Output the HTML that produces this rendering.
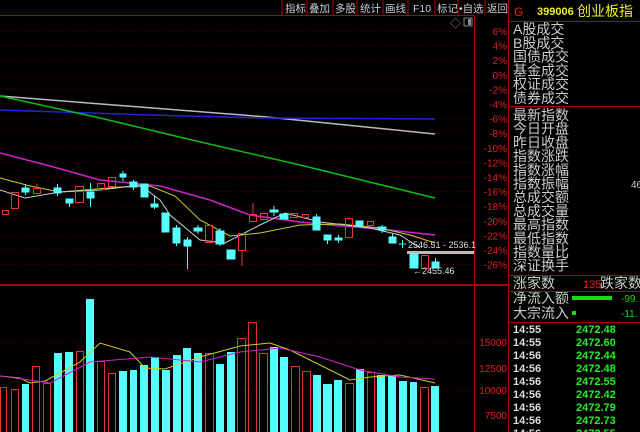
<!DOCTYPE html>
<html><head><meta charset="utf-8"><style>
body{margin:0;background:#000;width:640px;height:432px;overflow:hidden;font-family:"Liberation Sans","Noto Sans CJK SC",sans-serif}
svg{position:absolute;left:0;top:0}
</style></head><body>
<svg width="640" height="432" xmlns="http://www.w3.org/2000/svg" font-family="Liberation Sans, Noto Sans CJK SC, sans-serif">
<!-- toolbar -->
<line x1="0" y1="15.5" x2="474" y2="15.5" stroke="#a00" stroke-width="1"/>
<g stroke="#a00"><line x1="282" y1="0" x2="282" y2="15"/><line x1="307" y1="0" x2="307" y2="15"/><line x1="333" y1="0" x2="333" y2="15"/><line x1="357" y1="0" x2="357" y2="15"/><line x1="383" y1="0" x2="383" y2="15"/><line x1="408" y1="0" x2="408" y2="15"/><line x1="435" y1="0" x2="435" y2="15"/><line x1="458" y1="0" x2="458" y2="15"/><line x1="485" y1="0" x2="485" y2="15"/><line x1="508.5" y1="0" x2="508.5" y2="432"/></g>
<g fill="#ccc" font-size="10.5"><text x="285" y="12">指标</text><text x="309" y="12">叠加</text><text x="335" y="12">多股</text><text x="360" y="12">统计</text><text x="385" y="12">画线</text><text x="413" y="12">F10</text><text x="437" y="12">标记</text><text x="459" y="12">•自选</text><text x="487" y="12">返回</text></g>
<text x="450" y="27" fill="#888" font-size="11">◇</text><rect x="464" y="18" width="8" height="8" fill="none" stroke="#888"/><rect x="468" y="19" width="3" height="6" fill="#888"/>
<!-- axis -->
<line x1="474.5" y1="15" x2="474.5" y2="432" stroke="#a00"/>
<g stroke="#500" stroke-dasharray="1,2">
<line x1="0" y1="31" x2="474" y2="31"/><line x1="0" y1="45.6" x2="474" y2="45.6"/><line x1="0" y1="60.2" x2="474" y2="60.2"/><line x1="0" y1="74.8" x2="474" y2="74.8"/><line x1="0" y1="89.4" x2="474" y2="89.4"/><line x1="0" y1="104" x2="474" y2="104"/><line x1="0" y1="118.6" x2="474" y2="118.6"/><line x1="0" y1="133.2" x2="474" y2="133.2"/><line x1="0" y1="147.8" x2="474" y2="147.8"/><line x1="0" y1="162.4" x2="474" y2="162.4"/><line x1="0" y1="177" x2="474" y2="177"/><line x1="0" y1="191.6" x2="474" y2="191.6"/><line x1="0" y1="206.2" x2="474" y2="206.2"/><line x1="0" y1="220.8" x2="474" y2="220.8"/><line x1="0" y1="235.4" x2="474" y2="235.4"/><line x1="0" y1="250" x2="474" y2="250"/><line x1="0" y1="264.6" x2="474" y2="264.6"/>
<line x1="0" y1="342" x2="474" y2="342"/><line x1="0" y1="390" x2="474" y2="390"/>
</g>
<g fill="#d22" font-size="10" text-anchor="end">
<text x="507" y="35">6%</text><text x="507" y="49.6">4%</text><text x="507" y="64.2">2%</text><text x="507" y="78.8">0%</text><text x="507" y="93.4">-2%</text><text x="507" y="108">-4%</text><text x="507" y="122.6">-6%</text><text x="507" y="137.2">-8%</text><text x="507" y="151.8">-10%</text><text x="507" y="166.4">-12%</text><text x="507" y="181">-14%</text><text x="507" y="195.6">-16%</text><text x="507" y="210.2">-18%</text><text x="507" y="224.8">-20%</text><text x="507" y="239.4">-22%</text><text x="507" y="254">-24%</text><text x="507" y="268.6">-26%</text>
<text x="507" y="346">15000</text><text x="507" y="372">12500</text><text x="507" y="394">10000</text><text x="507" y="419">7500</text>
</g>
<line x1="0" y1="285" x2="509" y2="285" stroke="#a00" stroke-width="2"/>
<!-- MA lines main -->
<polyline fill="none" stroke="#bbb" stroke-width="1.5" points="0,96 267,117 435,134"/>
<polyline fill="none" stroke="#22d" stroke-width="1.5" points="0,110 150,115 267,118 435,119"/>
<polyline fill="none" stroke="#1b1" stroke-width="1.5" points="0,96 100,118 192,140 300,165 435,198"/>
<polyline fill="none" stroke="#c2c" stroke-width="1.5" points="0,153 50,166 100,180 160,186 210,200 250,215 300,222 330,225 380,229 435,235"/>
<polyline fill="none" stroke="#cc2" stroke-width="1" points="0,178 30,186 60,192 120,187 150,186 175,196 200,220 230,236 260,233 300,225 340,224 380,228 410,235 435,243"/>
<polyline fill="none" stroke="#ccc" stroke-width="1" points="0,190 25,198 60,192 100,190 140,185 160,200 170,215 200,240 225,243 260,225 285,213 320,222 370,228 400,235 420,248"/>
<!-- candles -->
<g fill="#5ff" stroke="#5ff">
<rect x="22" y="188" width="7" height="4"/><line x1="25.5" y1="184" x2="25.5" y2="195"/>
<rect x="54" y="188" width="7" height="5"/><line x1="57.5" y1="184" x2="57.5" y2="196"/>
<rect x="66" y="199" width="7" height="4"/><line x1="69.5" y1="199" x2="69.5" y2="207"/>
<rect x="87" y="192" width="7" height="6"/><line x1="90.5" y1="183" x2="90.5" y2="207"/>
<rect x="120" y="174" width="6" height="3"/><line x1="123" y1="171" x2="123" y2="181"/>
<rect x="130" y="182" width="7" height="5"/><line x1="133.5" y1="180" x2="133.5" y2="190"/>
<rect x="141" y="184" width="7" height="13"/>
<rect x="151" y="204" width="7" height="3"/><line x1="154.5" y1="196" x2="154.5" y2="209"/>
<rect x="162" y="213" width="7" height="19"/>
<rect x="173" y="228" width="7" height="15"/><line x1="176.5" y1="225" x2="176.5" y2="246"/>
<rect x="184" y="240" width="7" height="6"/><line x1="187.5" y1="237" x2="187.5" y2="269"/>
<rect x="194" y="228" width="8" height="3"/><line x1="198" y1="225" x2="198" y2="234"/>
<rect x="216" y="231" width="8" height="13"/><line x1="220" y1="228" x2="220" y2="246"/>
<rect x="227" y="250" width="8" height="9"/>
<rect x="270" y="210" width="8" height="2"/><line x1="274" y1="206" x2="274" y2="216"/>
<rect x="280" y="214" width="8" height="5"/>
<rect x="313" y="217" width="7" height="13"/><line x1="316.5" y1="214" x2="316.5" y2="230"/>
<rect x="324" y="235" width="7" height="5"/><line x1="327.5" y1="235" x2="327.5" y2="244"/>
<rect x="335" y="238" width="7" height="2"/><line x1="338.5" y1="235" x2="338.5" y2="243"/>
<rect x="356" y="221" width="7" height="5"/>
<rect x="378" y="227" width="8" height="3"/><line x1="382" y1="225" x2="382" y2="233"/>
<rect x="389" y="237" width="7" height="6"/><line x1="392.5" y1="234" x2="392.5" y2="243"/>
<line x1="399" y1="244" x2="406" y2="244"/><line x1="402.5" y1="240" x2="402.5" y2="248"/>
<rect x="410" y="253" width="8" height="15"/>
<rect x="432" y="262" width="7" height="6"/><line x1="435.5" y1="258" x2="435.5" y2="262"/>
</g>
<g fill="none" stroke="#e33">
<rect x="2.5" y="210.5" width="6" height="4"/><rect x="11.5" y="192.5" width="7" height="16"/>
<rect x="33.5" y="188.5" width="7" height="5"/><line x1="37" y1="184" x2="37" y2="188"/>
<rect x="75.5" y="186.5" width="8" height="16"/>
<rect x="97.5" y="183.5" width="7" height="6"/><rect x="108.5" y="177.5" width="7" height="9"/>
<rect x="205.5" y="225.5" width="7" height="17"/>
<rect x="238.5" y="233.5" width="7" height="17"/><line x1="242" y1="250" x2="242" y2="266"/>
<rect x="249.5" y="214.5" width="7" height="7"/><line x1="253" y1="203" x2="253" y2="214"/>
<rect x="260.5" y="213.5" width="7" height="6"/>
<rect x="290.5" y="213.5" width="7" height="4"/><rect x="302.5" y="214.5" width="6" height="3"/>
<rect x="345.5" y="218.5" width="7" height="19"/>
<rect x="367.5" y="221.5" width="6" height="4"/>
<rect x="421.5" y="255.5" width="7" height="13"/>
</g>
<rect x="407" y="251" width="67" height="3" fill="#bbb"/>
<text x="408" y="248" fill="#ddd" font-size="9">2546.51 - 2536.1</text>
<text x="413" y="274" fill="#ddd" font-size="9">←2455.46</text>
<!-- volume bars -->
<g fill="#5ff">
<rect x="22" y="384" width="7" height="48"/><rect x="54" y="353" width="8" height="79"/><rect x="65" y="352" width="8" height="80"/><rect x="86" y="299" width="8" height="133"/><rect x="119" y="371" width="8" height="61"/><rect x="130" y="370" width="7" height="62"/><rect x="140" y="365" width="8" height="67"/><rect x="151" y="357" width="8" height="75"/><rect x="162" y="370" width="8" height="62"/><rect x="173" y="355" width="8" height="77"/><rect x="183" y="348" width="8" height="84"/><rect x="194" y="353" width="8" height="79"/><rect x="216" y="364" width="8" height="68"/><rect x="227" y="352" width="8" height="80"/><rect x="270" y="347" width="8" height="85"/><rect x="280" y="357" width="8" height="75"/><rect x="313" y="375" width="8" height="57"/><rect x="323" y="384" width="9" height="48"/><rect x="334" y="380" width="8" height="52"/><rect x="356" y="369" width="8" height="63"/><rect x="377" y="375" width="8" height="57"/><rect x="388" y="375" width="8" height="57"/><rect x="399" y="381" width="8" height="51"/><rect x="410" y="382" width="7" height="50"/><rect x="431" y="386" width="8" height="46"/>
</g>
<g fill="none" stroke="#d33">
<rect x="0.5" y="387.5" width="6" height="46"/><rect x="11.5" y="389.5" width="7" height="44"/><rect x="32.5" y="366.5" width="7" height="67"/><rect x="43.5" y="383.5" width="7" height="50"/><rect x="76.5" y="351.5" width="7" height="82"/><rect x="97.5" y="361.5" width="7" height="72"/><rect x="108.5" y="373.5" width="7" height="60"/><rect x="205.5" y="353.5" width="8" height="80"/><rect x="237.5" y="338.5" width="8" height="95"/><rect x="248.5" y="322.5" width="8" height="111"/><rect x="259.5" y="353.5" width="8" height="80"/><rect x="291.5" y="366.5" width="8" height="67"/><rect x="302.5" y="371.5" width="8" height="62"/><rect x="345.5" y="383.5" width="8" height="50"/><rect x="367.5" y="372.5" width="7" height="61"/><rect x="420.5" y="387.5" width="8" height="46"/>
</g>
<polyline fill="none" stroke="#cc2" stroke-width="1" points="0,376 20,378 30,383 45,381 60,373 80,362 100,343 130,352 145,368 165,369 200,357 240,346 270,343 290,350 310,360 350,380 370,377 400,375 435,383"/>
<polyline fill="none" stroke="#c2c" stroke-width="1" points="0,376 30,380 50,383 90,362 150,357 200,362 240,352 280,348 320,357 360,370 400,377 435,379"/>
<!-- right panel -->
<text x="514" y="16" fill="#e22" font-size="12">G</text>
<text x="537" y="15" fill="#ee2" font-size="11" font-weight="bold">399006</text><text x="577" y="16" fill="#ee2" font-size="14">创业板指</text>
<line x1="509" y1="21.5" x2="640" y2="21.5" stroke="#a00"/>
<line x1="509" y1="106.5" x2="640" y2="106.5" stroke="#a00"/>
<g fill="#ccc" font-size="14">
<text x="513" y="34">A股成交</text><text x="513" y="47.8">B股成交</text><text x="513" y="61.6">国债成交</text><text x="513" y="75.4">基金成交</text><text x="513" y="89.2">权证成交</text><text x="513" y="103">债券成交</text>
<text x="513" y="120">最新指数</text><text x="513" y="133.7">今日开盘</text><text x="513" y="147.4">昨日收盘</text><text x="513" y="161.1">指数涨跌</text><text x="513" y="174.8">指数涨幅</text><text x="513" y="188.5">指数振幅</text><text x="513" y="202.2">总成交额</text><text x="513" y="215.9">总成交量</text><text x="513" y="229.6">最高指数</text><text x="513" y="243.3">最低指数</text><text x="513" y="257">指数量比</text><text x="513" y="270.7">深证换手</text>
<text x="513" y="288">涨家数</text><text x="600" y="288">跌家数</text>
<text x="513" y="303">净流入额</text><text x="513" y="318">大宗流入</text>
</g>
<text x="631" y="188" fill="#ccc" font-size="10">46</text>
<line x1="509" y1="275.5" x2="640" y2="275.5" stroke="#a00"/>
<text x="583" y="288" fill="#e22" font-size="11">135</text>
<line x1="509" y1="291.5" x2="640" y2="291.5" stroke="#a00"/>
<rect x="572" y="296" width="40" height="4" fill="#1d1"/><rect x="572" y="311" width="4" height="4" fill="#1d1"/>
<text x="621" y="302" fill="#1d1" font-size="10">-99.</text><text x="621" y="317" fill="#1d1" font-size="10">-11.</text>
<line x1="509" y1="322.5" x2="640" y2="322.5" stroke="#a00"/>
<g fill="#ddd" font-size="11" font-weight="bold"><text x="513" y="333">14:55</text><text x="513" y="346">14:55</text><text x="513" y="359">14:56</text><text x="513" y="372">14:56</text><text x="513" y="385">14:56</text><text x="513" y="398">14:56</text><text x="513" y="411">14:56</text><text x="513" y="424">14:56</text><text x="513" y="437">14:56</text></g>
<g fill="#2e2" font-size="11" font-weight="bold"><text x="576" y="333">2472.48</text><text x="576" y="346">2472.60</text><text x="576" y="359">2472.44</text><text x="576" y="372">2472.48</text><text x="576" y="385">2472.55</text><text x="576" y="398">2472.42</text><text x="576" y="411">2472.79</text><text x="576" y="424">2472.73</text><text x="576" y="437">2472.55</text></g>
</svg>
</body></html>
